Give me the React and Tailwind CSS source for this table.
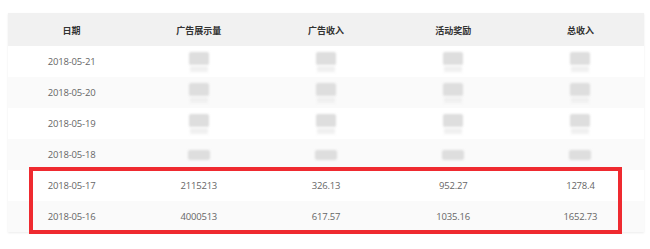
const columns = ['日期', '广告展示量', '广告收入', '活动奖励', '总收入']

const rows = [
  { date: '2018-05-21', hidden: true },
  { date: '2018-05-20', hidden: true },
  { date: '2018-05-19', hidden: true },
  { date: '2018-05-18', hidden: true, short: true },
  { date: '2018-05-17', values: ['2115213', '326.13', '952.27', '1278.4'] },
  { date: '2018-05-16', values: ['4000513', '617.57', '1035.16', '1652.73'] },
]

function Blur({ short }) {
  return (
    <div className="flex flex-col items-center">
      <div className={`${short ? 'h-[10px] w-[22px]' : 'h-[13px] w-[20px]'} rounded-[2px] bg-[#dedede] blur-[1.2px]`} />
      {!short && <div className="mt-[1px] h-[6px] w-[18px] bg-[#f0f0f0] blur-[1.5px]" />}
    </div>
  )
}

export default function App() {
  return (
    <main
      className="h-[249px] w-[650px] bg-white pt-[13px] pl-[8px]"
      style={{ fontFamily: '"Open Sans", "Noto Sans CJK SC", sans-serif' }}
    >
      <div className="relative w-[636px] shadow-[0_1px_2px_rgba(0,0,0,0.08)]">
        <div className="grid h-[33px] grid-cols-5 items-center bg-[#f1f1f1] pt-[2px] text-[9px] font-bold text-[#333]">
          {columns.map((c) => (
            <div key={c} className="text-center">{c}</div>
          ))}
        </div>

        {rows.map((r, i) => (
          <div
            key={r.date}
            className={`grid h-[31px] grid-cols-5 items-center pt-[1px] text-[9.5px] tracking-[-0.2px] text-[#666] ${i % 2 ? 'bg-[#fafafa]' : 'bg-white'}`}
          >
            <div className="text-center">{r.date}</div>
            {r.hidden
              ? [0, 1, 2, 3].map((k) => (
                  <div key={k} className="flex justify-center">
                    <Blur short={r.short} />
                  </div>
                ))
              : r.values.map((v, k) => (
                  <div key={k} className="text-center">{v}</div>
                ))}
          </div>
        ))}

        {/* annotation box over the last two rows */}
        <div className="pointer-events-none absolute left-[21px] top-[154px] h-[67px] w-[593px] border-[4px] border-[#ef2a30]" />
      </div>
    </main>
  )
}
